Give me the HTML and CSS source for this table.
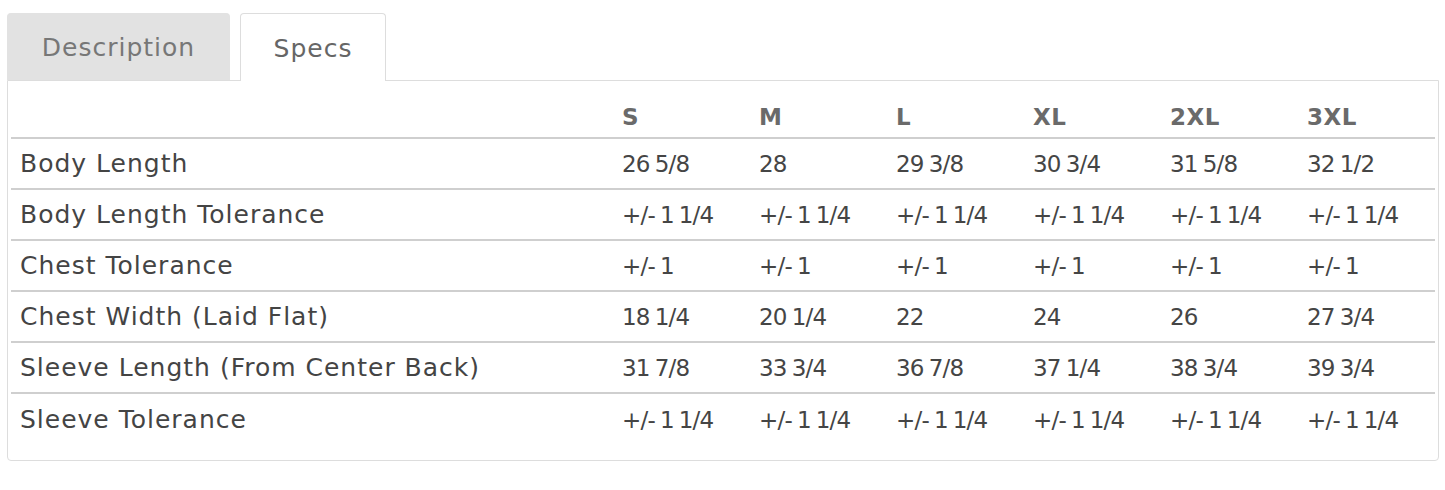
FILE: index.html
```html
<!DOCTYPE html>
<html>
<head>
<meta charset="utf-8">
<link rel="stylesheet" href="styles.css">
</head>
<body>
<div class="wrap">
  <div class="tabs">
    <div class="tab">Description</div>
    <div class="tab active">Specs</div>
  </div>
  <div class="panel">
    <table class="specs">
      <thead>
        <tr><th class="label"></th><th>S</th><th>M</th><th>L</th><th>XL</th><th>2XL</th><th>3XL</th></tr>
      </thead>
      <tbody>
        <tr><td class="label">Body Length</td><td>26 5/8</td><td>28</td><td>29 3/8</td><td>30 3/4</td><td>31 5/8</td><td>32 1/2</td></tr>
        <tr><td class="label">Body Length Tolerance</td><td>+/- 1 1/4</td><td>+/- 1 1/4</td><td>+/- 1 1/4</td><td>+/- 1 1/4</td><td>+/- 1 1/4</td><td>+/- 1 1/4</td></tr>
        <tr><td class="label">Chest Tolerance</td><td>+/- 1</td><td>+/- 1</td><td>+/- 1</td><td>+/- 1</td><td>+/- 1</td><td>+/- 1</td></tr>
        <tr><td class="label">Chest Width (Laid Flat)</td><td>18 1/4</td><td>20 1/4</td><td>22</td><td>24</td><td>26</td><td>27 3/4</td></tr>
        <tr><td class="label">Sleeve Length (From Center Back)</td><td>31 7/8</td><td>33 3/4</td><td>36 7/8</td><td>37 1/4</td><td>38 3/4</td><td>39 3/4</td></tr>
        <tr><td class="label">Sleeve Tolerance</td><td>+/- 1 1/4</td><td>+/- 1 1/4</td><td>+/- 1 1/4</td><td>+/- 1 1/4</td><td>+/- 1 1/4</td><td>+/- 1 1/4</td></tr>
      </tbody>
    </table>
  </div>
</div>
</body>
</html>
```

FILE: styles.css
```css
html, body { margin: 0; padding: 0; background: #fff; }
body { font-family: "DejaVu Sans", sans-serif; color: #444; }
.wrap { padding: 13px 6px 0 7px; }
.tabs { display: flex; gap: 10px; align-items: flex-end; }
.tab {
  height: 67px;
  box-sizing: border-box;
  display: flex; align-items: center; justify-content: center;
  font-size: 25px;
  letter-spacing: 1px;
  color: #777;
  background: #e2e2e2;
  border: 1px solid #e2e2e2;
  border-bottom: none;
  border-radius: 4px 4px 0 0;
  width: 223px;
}
.tab.active {
  width: 146px;
  height: 68px;
  background: #fff;
  border-color: #ddd;
  color: #666;
  margin-bottom: -1px;
  position: relative;
  z-index: 1;
  padding-top: 1px;
}
.panel {
  border: 1px solid #ddd;
  border-radius: 0 0 4px 4px;
  padding: 16px 3px 15px 3px;
}
.specs { width: 100%; border-collapse: collapse; table-layout: fixed; }
.specs th, .specs td {
  text-align: left;
  padding: 0 0 0 9px;
  font-size: 23px;
  white-space: nowrap;
}
.specs th { height: 40px; font-weight: bold; color: #6a6a6a; border-bottom: 2px solid #cfcfcf; letter-spacing: 0.5px; }
.specs td { height: 49px; color: #454545; border-bottom: 2px solid #cfcfcf; letter-spacing: -0.8px; word-spacing: -1.5px; }
.specs td.label { font-size: 25px; letter-spacing: 1px; word-spacing: 0; color: #444; }
.specs tbody tr:last-child td { border-bottom: none; height: 51px; }
.specs th.label, .specs td.label { width: 593px; }
```
